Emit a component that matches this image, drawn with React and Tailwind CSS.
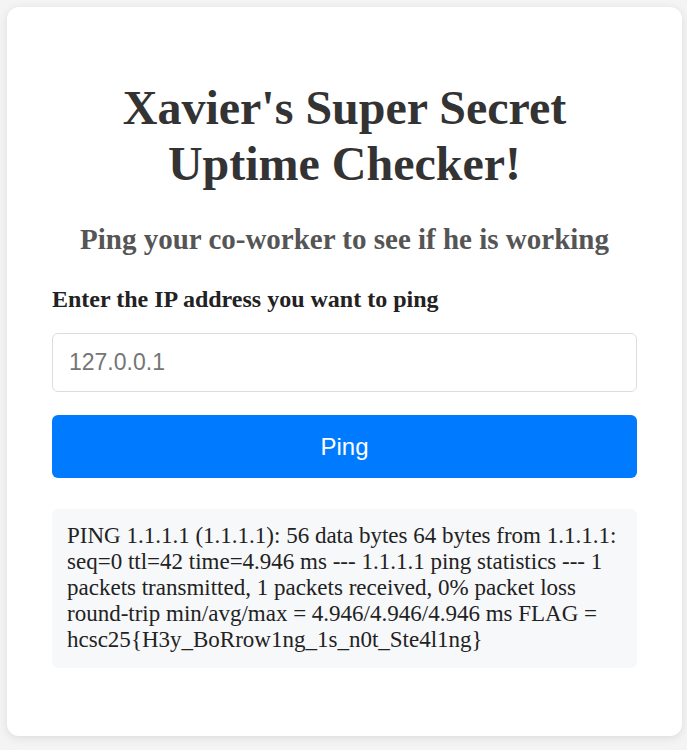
import React, { useState } from "react";

const App = () => {
  const [ip, setIp] = useState("");

  return (
    <div className="min-h-screen bg-[#f4f4f4] pl-[7px] pr-[5px] py-[7px] font-['Liberation_Serif',serif]">
      <div className="bg-white rounded-[12px] shadow-[0_2px_10px_rgba(0,0,0,0.1)] px-[45px] pt-[73px] pb-[68px]">
        <h1 className="text-center text-[#333] font-bold text-[48px] leading-[56px]">
          Xavier's Super Secret Uptime Checker!
        </h1>
        <h2 className="text-center text-[#555] font-bold text-[29px] leading-[33px] mt-[31px]">
          Ping your co-worker to see if he is working
        </h2>

        <label className="block text-[#222] font-bold text-[24px] leading-[28px] mt-[29px]">
          Enter the IP address you want to ping
        </label>
        <input
          value={ip}
          onChange={(e) => setIp(e.target.value)}
          placeholder="127.0.0.1"
          className="block w-full mt-[20px] h-[59px] border border-[#ddd] rounded-[6px] px-[16px] text-[23px] font-['Liberation_Sans',sans-serif] placeholder:text-[#757575] outline-none"
        />
        <button className="block w-full mt-[23px] h-[63px] bg-[#007bff] text-white rounded-[6px] text-[24px] font-['Liberation_Sans',sans-serif]">
          Ping
        </button>

        {/* ping output */}
        <div className="mt-[31px] bg-[#f7f8fa] rounded-[6px] px-[15px] pt-[14px] pb-[15px] text-[#222] text-[23px] leading-[26px]">
          PING 1.1.1.1 (1.1.1.1): 56 data bytes 64 bytes from 1.1.1.1: seq=0 ttl=42 time=4.946 ms --- 1.1.1.1 ping statistics --- 1 packets transmitted, 1 packets received, 0% packet loss round-trip min/avg/max = 4.946/4.946/4.946 ms FLAG = hcsc25{"{"}H3y_BoRrow1ng_1s_n0t_Ste4l1ng{"}"}
        </div>
      </div>
    </div>
  );
};

export default App;
